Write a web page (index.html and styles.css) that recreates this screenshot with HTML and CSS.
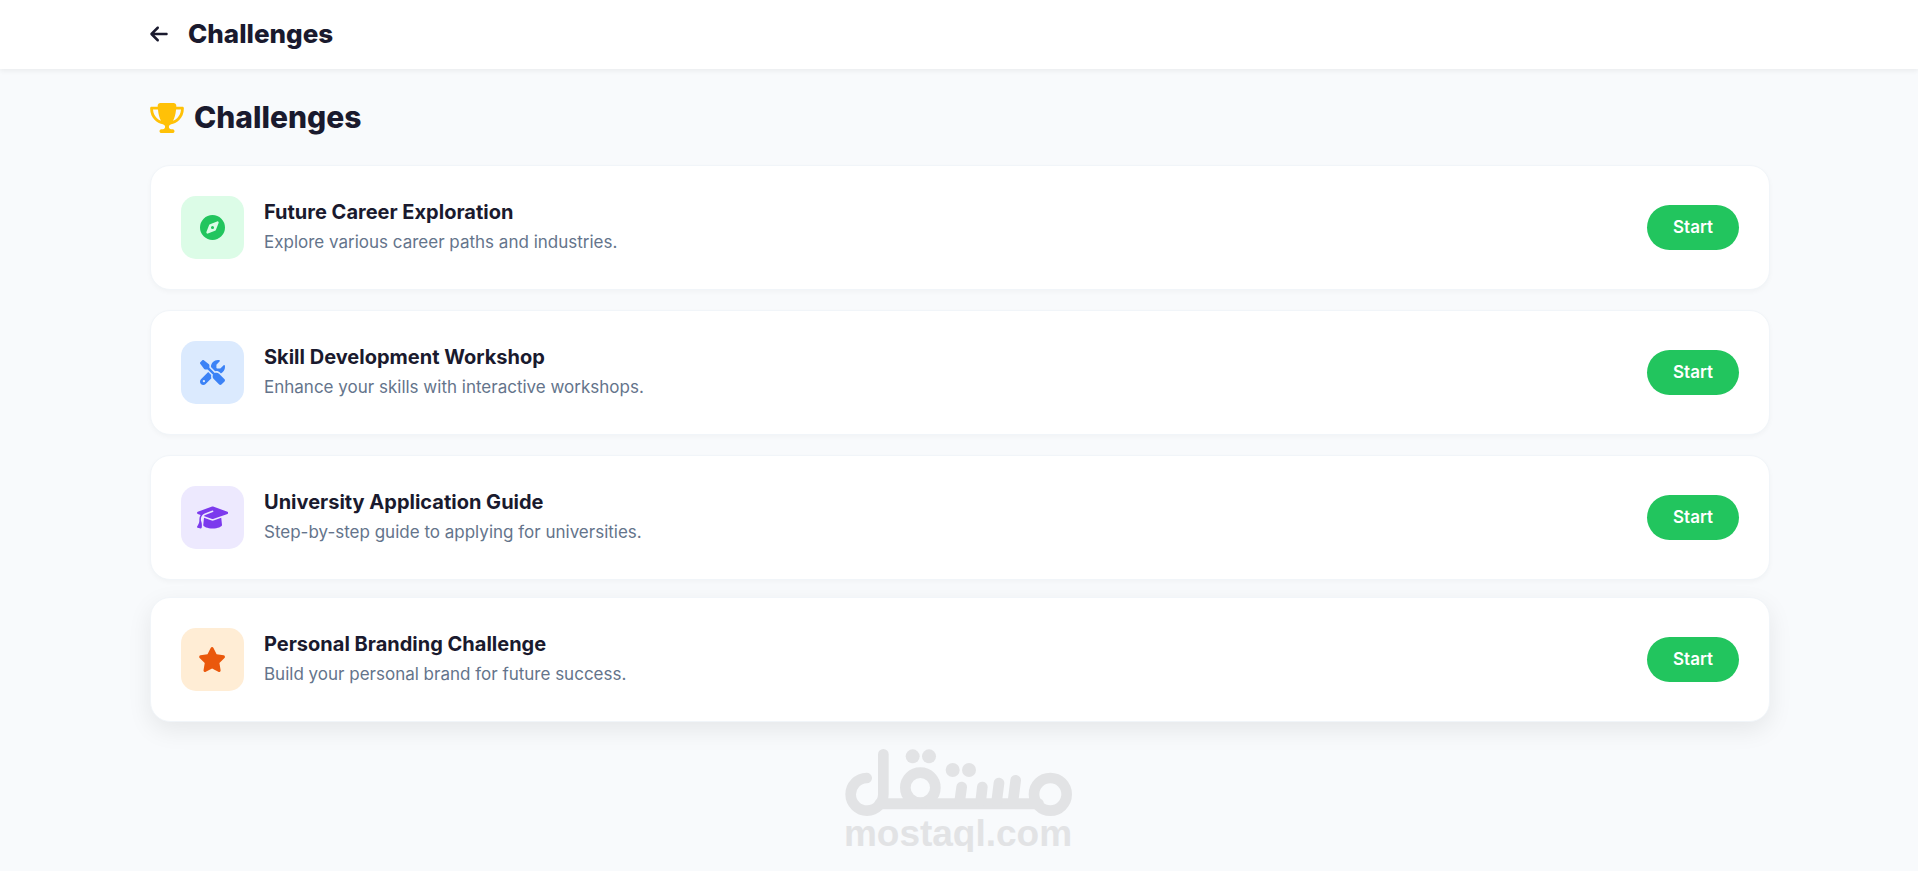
FILE: index.html
```html
<!DOCTYPE html>
<html lang="en">
<head>
<meta charset="utf-8">
<meta name="viewport" content="width=device-width, initial-scale=1">
<title>Challenges</title>
<link rel="stylesheet" href="styles.css">
</head>
<body>
<header class="topbar">
  <a class="back" href="#" aria-label="Back">
    <svg viewBox="0 0 448 512" aria-hidden="true"><path d="M9.4 233.4c-12.5 12.5-12.5 32.8 0 45.3l160 160c12.5 12.5 32.8 12.5 45.3 0s12.5-32.8 0-45.3L109.2 288 416 288c17.7 0 32-14.3 32-32s-14.3-32-32-32l-306.7 0L214.6 118.6c12.5-12.5 12.5-32.8 0-45.3s-32.8-12.5-45.3 0l-160 160z"/></svg>
  </a>
  <h1 class="topbar-title">Challenges</h1>
</header>
<main class="page">
  <h2 class="heading">
    <svg class="trophy" viewBox="0 0 576 512" aria-hidden="true"><path d="M400 0L176 0c-26.5 0-48.1 21.8-47.1 48.2c.2 5.3 .4 10.6 .7 15.8L24 64C10.7 64 0 74.7 0 88c0 92.6 33.5 157 78.5 200.7c44.3 43.1 98.3 64.8 138.1 75.8c23.4 6.5 39.4 26 39.4 45.6c0 20.9-17 37.9-37.9 37.9L192 448c-17.7 0-32 14.3-32 32s14.3 32 32 32l192 0c17.7 0 32-14.3 32-32s-14.3-32-32-32l-26.1 0C337 448 320 431 320 410.1c0-19.6 15.9-39.2 39.4-45.6c39.9-11 93.9-32.7 138.2-75.8C542.5 245 576 180.6 576 88c0-13.3-10.7-24-24-24L446.4 64c.3-5.2 .5-10.4 .7-15.8C448.1 21.8 426.5 0 400 0zM48.9 112l84.4 0c9.1 90.1 29.2 150.3 51.9 190.6c-24.9-11-50.8-26.5-73.2-48.3c-32-31.1-58-76-63-142.3zM464.1 254.3c-22.4 21.8-48.3 37.3-73.2 48.3c22.7-40.3 42.8-100.5 51.9-190.6l84.4 0c-5.1 66.3-31.1 111.2-63 142.3z"/></svg>
    Challenges
  </h2>
  <ul class="list">
    <li class="card">
      <span class="tile tile-green"><svg viewBox="0 0 512 512" aria-hidden="true"><path d="M256 512A256 256 0 1 0 256 0a256 256 0 1 0 0 512zm50.7-186.9L162.4 380.6c-19.4 7.5-38.5-11.6-31-31l55.5-144.3c3.3-8.5 9.9-15.1 18.4-18.4l144.3-55.5c19.4-7.5 38.5 11.6 31 31L325.1 306.7c-3.2 8.5-9.9 15.1-18.4 18.4zM288 256a32 32 0 1 0 -64 0 32 32 0 1 0 64 0z"/></svg></span>
      <div class="info">
        <h3 class="title">Future Career Exploration</h3>
        <p class="desc">Explore various career paths and industries.</p>
      </div>
      <button class="start" type="button">Start</button>
    </li>
    <li class="card">
      <span class="tile tile-blue"><svg viewBox="0 0 512 512" aria-hidden="true"><path d="M78.6 5C69.1-2.4 55.6-1.5 47 7L7 47c-8.5 8.5-9.4 22-2.1 31.6l80 104c4.5 5.9 11.6 9.4 19 9.4l54.1 0 109 109c-14.7 29-10 65.4 14.3 89.6l112 112c12.5 12.5 32.8 12.5 45.3 0l64-64c12.5-12.5 12.5-32.8 0-45.3l-112-112c-24.2-24.2-60.6-29-89.6-14.3l-109-109 0-54.1c0-7.5-3.5-14.5-9.4-19L78.6 5zM19.9 396.1C7.2 408.8 0 426.1 0 444.1C0 481.6 30.4 512 67.9 512c18 0 35.3-7.2 48-19.9L233.7 374.3c-7.8-20.9-9-43.6-3.6-65.1l-61.7-61.7L19.9 396.1zM512 144c0-10.5-1.1-20.7-3.2-30.5c-2.4-11.2-16.1-14.1-24.2-6l-63.9 63.9c-3 3-7.1 4.7-11.3 4.7L352 176c-8.8 0-16-7.2-16-16l0-57.4c0-4.2 1.7-8.3 4.7-11.3l63.9-63.9c8.1-8.1 5.2-21.8-6-24.2C388.7 1.1 378.5 0 368 0C288.5 0 224 64.5 224 144l0 .8 85.3 85.3c36-9.1 75.8 .5 104 28.7L429 274.5c49-23 83-72.8 83-130.5zM56 432a24 24 0 1 1 48 0 24 24 0 1 1 -48 0z"/></svg></span>
      <div class="info">
        <h3 class="title">Skill Development Workshop</h3>
        <p class="desc">Enhance your skills with interactive workshops.</p>
      </div>
      <button class="start" type="button">Start</button>
    </li>
    <li class="card">
      <span class="tile tile-purple"><svg viewBox="0 0 640 512" aria-hidden="true"><path d="M320 32c-8.1 0-16.1 1.4-23.7 4.1L15.8 137.4C6.3 140.9 0 149.9 0 160s6.3 19.1 15.8 22.6l57.9 20.9C57.3 229.3 48 259.8 48 291.9l0 28.1c0 28.4-10.8 57.7-22.3 80.8c-6.5 13-13.9 25.8-22.5 37.6C0 442.7-.9 448.3 .9 453.4s6 8.9 11.2 10.2l64 16c4.2 1.1 8.7 .3 12.4-2s6.3-6.1 7.1-10.4c8.6-42.8 4.3-81.2-2.1-108.7C90.3 344.3 86 329.8 80 316.5l0-24.6c0-30.2 10.2-58.7 27.9-81.5c12.9-15.5 29.6-28 49.2-35.7l157-61.7c8.2-3.2 17.5 .8 20.7 9s-.8 17.5-9 20.7l-157 61.7c-12.4 4.9-23.3 12.4-32.2 21.6l159.6 57.6c7.6 2.7 15.6 4.1 23.7 4.1s16.1-1.4 23.7-4.1L624.2 182.6c9.5-3.4 15.8-12.5 15.8-22.6s-6.3-19.1-15.8-22.6L343.7 36.1C336.1 33.4 328.1 32 320 32zM128 408c0 35.3 86 72 192 72s192-36.7 192-72L496.7 262.6 354.5 314c-11.1 4-22.8 6-34.5 6s-23.5-2-34.5-6L143.3 262.6 128 408z"/></svg></span>
      <div class="info">
        <h3 class="title">University Application Guide</h3>
        <p class="desc">Step-by-step guide to applying for universities.</p>
      </div>
      <button class="start" type="button">Start</button>
    </li>
    <li class="card card-raised">
      <span class="tile tile-orange"><svg viewBox="0 0 576 512" aria-hidden="true"><path d="M316.9 18C311.6 7 300.4 0 288.1 0s-23.4 7-28.8 18L195 150.3 51.4 171.5c-12 1.8-22 10.2-25.7 21.7s-.7 24.2 7.9 32.7L137.8 329 113.2 474.7c-2 12 3 24.2 12.9 31.3s23 8 33.8 2.3l128.3-68.5 128.3 68.5c10.8 5.7 23.9 4.9 33.8-2.3s14.9-19.3 12.9-31.3L438.5 329 542.7 225.9c8.6-8.5 11.7-21.2 7.9-32.7s-13.7-19.9-25.7-21.7L381.2 150.3 316.9 18z"/></svg></span>
      <div class="info">
        <h3 class="title">Personal Branding Challenge</h3>
        <p class="desc">Build your personal brand for future success.</p>
      </div>
      <button class="start" type="button">Start</button>
    </li>
  </ul>
</main>
<footer class="brand">
  <svg class="brand-mark" viewBox="45 42 681 202" role="img" aria-label="مستقل">
    <g fill="none" stroke="currentColor" stroke-width="32" stroke-linecap="round">
      <path d="M110 129A49 49 0 1 0 160 178V58"/>
      <path d="M150 206H625" stroke-width="33"/>
      <circle cx="271" cy="158" r="45"/>
      <path d="M395 156L389 200M457 156L452 200M507 144L500 200M557 136L549 200"/>
      <circle cx="661" cy="178" r="49"/>
    </g>
    <g fill="currentColor">
      <circle cx="248" cy="64" r="21"/><circle cx="297" cy="64" r="21"/>
      <circle cx="368" cy="105" r="21"/><circle cx="417" cy="105" r="21"/>
    </g>
  </svg>
  <span class="brand-name">mostaql.com</span>
</footer>
</body>
</html>
```
FILE: styles.css
```css
* { box-sizing: border-box; }

body {
  margin: 0;
  background: #f8fafc;
  color: #1a1a2e;
  font-family: Inter, "Liberation Sans", sans-serif;
}

h1, h2, h3, p, ul { margin: 0; padding: 0; }

svg { display: block; fill: currentColor; }

.topbar {
  display: flex;
  align-items: center;
  gap: 20px;
  padding: 17px 150px 19px;
  background: #fff;
  box-shadow: 0 2px 5px rgba(0, 0, 0, 0.06);
}

.back { color: inherit; }
.back svg { height: 20px; width: 18px; }

.topbar-title {
  font-size: 26px;
  line-height: 33px;
  font-weight: 800;
}

.page { padding: 30px 148px 0 150px; }

.heading {
  display: flex;
  align-items: center;
  gap: 10px;
  margin-bottom: 29px;
  font-size: 30px;
  line-height: 37px;
  font-weight: 800;
}

.trophy {
  width: 34px;
  height: 30px;
  color: #ffc107;
}

.list {
  display: flex;
  flex-direction: column;
  gap: 20px;
  list-style: none;
}

.card {
  display: flex;
  align-items: center;
  gap: 20px;
  padding: 30px;
  border: 1px solid #f1f5f9;
  background: #fff;
  border-radius: 20px;
  box-shadow: 0 2px 5px rgba(0, 0, 0, 0.03);
}

.card-raised {
  transform: translateY(-3px);
  box-shadow: 0 8px 25px rgba(0, 0, 0, 0.08);
}

.tile {
  display: flex;
  align-items: center;
  justify-content: center;
  width: 63px;
  height: 63px;
  border-radius: 15px;
}
.tile svg { height: 25px; }

.tile-green { background: #dcfce7; color: #22c55e; }
.tile-blue { background: #dbeafe; color: #3b82f6; }
.tile-purple { background: #ede9fe; color: #7c3aed; }
.tile-orange { background: #ffedd5; color: #ea580c; }

.info {
  flex: 1;
  padding-bottom: 2px;
}

.title {
  margin-bottom: 6px;
  font-size: 20px;
  line-height: 24px;
  font-weight: 700;
}

.desc {
  color: #64748b;
  font-size: 17px;
  line-height: 24px;
}

.start {
  padding: 12px 26px;
  border: 0;
  border-radius: 30px;
  background: #22c55e;
  color: #fff;
  font: 600 17px/21px Inter, "Liberation Sans", sans-serif;
  cursor: pointer;
}

.brand {
  display: flex;
  flex-direction: column;
  align-items: center;
  padding: 24px 2px 0 0;
  color: #e2e3e5;
}
.brand-mark { width: 227px; }
.brand-name {
  font: 700 37px/36px "Liberation Sans", Arial, sans-serif;
}
```
